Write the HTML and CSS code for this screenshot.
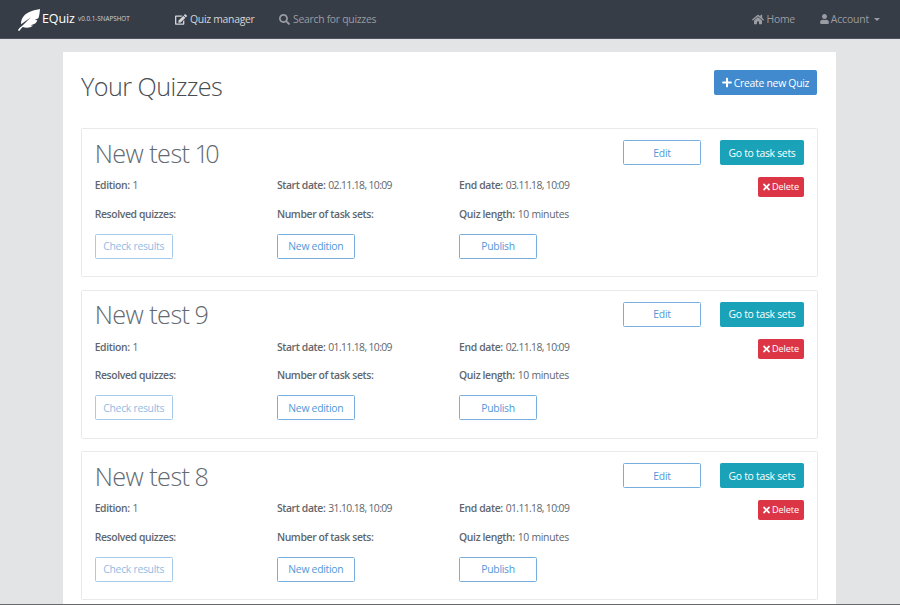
FILE: index.html
```html
<!DOCTYPE html>
<html lang="en">
<head>
<meta charset="utf-8">
<title>EQuiz</title>
<link rel="stylesheet" href="styles.css">
</head>
<body>
<svg class="sprite" aria-hidden="true">
  <symbol id="i-feather" viewBox="0 0 512 512"><path d="M512 0C460 22 350 20 240 82C130 144 66 235 72 352L300 190L118 372C72 410 30 445 4 480C-6 500 14 520 34 506C60 480 80 440 112 420C190 448 290 440 350 392L290 382L400 340C425 315 440 290 452 262L388 258L474 216C500 150 506 70 512 0z"/></symbol>
  <symbol id="i-edit" viewBox="0 0 576 512"><path d="M402.600 83.200l90.200 90.200c3.800 3.800 3.800 10 0 13.800L274.400 405.600l-92.800 10.300c-12.400 1.400-22.900-9.100-21.500-21.500l10.300-92.800L388.800 83.200c3.800-3.800 10-3.800 13.800 0zm162-22.900l-48.800-48.800c-15.200-15.200-39.900-15.200-55.200 0l-35.400 35.400c-3.800 3.800-3.800 10 0 13.800l90.200 90.200c3.800 3.800 10 3.800 13.800 0l35.400-35.400c15.200-15.300 15.200-40 0-55.200zM384 346.200V448H64V128h229.800c3.200 0 6.200-1.300 8.500-3.500l40-40c7.600-7.600 2.200-20.500-8.500-20.500H48C21.500 64 0 85.500 0 112v352c0 26.500 21.500 48 48 48h352c26.500 0 48-21.500 48-48V306.200c0-10.700-12.900-16-20.500-8.500l-40 40c-2.200 2.300-3.500 5.300-3.500 8.500z"/></symbol>
  <symbol id="i-search" viewBox="0 0 512 512"><path d="M505 442.700L405.300 343c-4.500-4.500-10.600-7-17-7H372c27.600-35.300 44-79.700 44-128C416 93.100 322.900 0 208 0S0 93.100 0 208s93.100 208 208 208c48.300 0 92.700-16.400 128-44v16.300c0 6.400 2.500 12.500 7 17l99.700 99.700c9.400 9.400 24.600 9.400 33.900 0l28.300-28.300c9.400-9.400 9.400-24.600.1-34zM208 336c-70.700 0-128-57.200-128-128 0-70.700 57.200-128 128-128 70.700 0 128 57.200 128 128 0 70.700-57.200 128-128 128z"/></symbol>
  <symbol id="i-home" viewBox="0 0 576 512"><path d="M280.370 148.260L96 300.110V464a16 16 0 0 0 16 16l112-.3a16 16 0 0 0 16-16V368a16 16 0 0 1 16-16h64a16 16 0 0 1 16 16v95.600a16 16 0 0 0 16 16.100L464 480a16 16 0 0 0 16-16V300L295.670 148.260a12.200 12.200 0 0 0-15.300 0zM571.600 251.470L488 182.560V44a12 12 0 0 0-12-12h-56a12 12 0 0 0-12 12v72.600L318.470 43a48 48 0 0 0-61 0L4.340 251.470a12 12 0 0 0-1.600 16.900l25.500 31a12 12 0 0 0 16.900 1.600L280.370 107.200a12.200 12.200 0 0 1 15.300 0L530.900 301a12 12 0 0 0 16.900-1.600l25.500-31a12 12 0 0 0-1.700-16.930z"/></symbol>
  <symbol id="i-user" viewBox="0 0 448 512"><path d="M224 256c70.700 0 128-57.300 128-128S294.700 0 224 0 96 57.300 96 128s57.300 128 128 128zm89.600 32h-16.700c-22.200 10.200-46.900 16-72.900 16s-50.600-5.800-72.900-16h-16.700C60.200 288 0 348.200 0 422.400V464c0 26.500 21.500 48 48 48h352c26.500 0 48-21.500 48-48v-41.600c0-74.200-60.200-134.400-134.400-134.400z"/></symbol>
  <symbol id="i-plus" viewBox="0 0 448 512"><path d="M416 208H272V64c0-17.670-14.330-32-32-32h-32c-17.670 0-32 14.330-32 32v144H32c-17.670 0-32 14.330-32 32v32c0 17.670 14.330 32 32 32h144v144c0 17.670 14.330 32 32 32h32c17.670 0 32-14.330 32-32V304h144c17.670 0 32-14.330 32-32v-32c0-17.670-14.330-32-32-32z"/></symbol>
  <symbol id="i-times" viewBox="0 0 352 512"><path d="M242.720 256l100.070-100.070c12.280-12.280 12.280-32.190 0-44.480l-22.240-22.240c-12.280-12.280-32.190-12.280-44.480 0L176 189.280 75.930 89.210c-12.280-12.280-32.190-12.280-44.480 0L9.210 111.450c-12.280 12.280-12.280 32.190 0 44.480L109.280 256 9.210 356.070c-12.280 12.280-12.280 32.190 0 44.480l22.240 22.240c12.280 12.280 32.200 12.280 44.480 0L176 322.720l100.070 100.070c12.280 12.280 32.200 12.280 44.480 0l22.240-22.240c12.280-12.280 12.280-32.190 0-44.480L242.720 256z"/></symbol>
</svg>

<nav class="navbar">
  <a class="brand"><svg class="logo"><use href="#i-feather"/></svg><span class="name">EQuiz</span><span class="version">v0.0.1-SNAPSHOT</span></a>
  <a class="link manager active"><svg class="ic-edit"><use href="#i-edit"/></svg><span>Quiz manager</span></a>
  <a class="link search"><svg class="ic-search"><use href="#i-search"/></svg><span>Search for quizzes</span></a>
  <div class="right">
    <a class="link"><svg class="ic-home"><use href="#i-home"/></svg><span>Home</span></a>
    <a class="link account"><svg class="ic-user"><use href="#i-user"/></svg><span>Account</span><i class="caret"></i></a>
  </div>
</nav>

<main class="panel">
  <header class="head">
    <h1>Your Quizzes</h1>
    <button class="btn primary"><svg class="ic-plus"><use href="#i-plus"/></svg><span>Create new Quiz</span></button>
  </header>

  <section class="card">
    <div class="top"><h2>New test <span class="num">10</span></h2><button class="btn outline">Edit</button><button class="btn info">Go to task sets</button></div>
    <div class="grid">
      <p><b>Edition:</b> 1</p><p><b>Start date:</b> <span class="date">02.11.18, 10:09</span></p><p><b>End date:</b> <span class="date">03.11.18, 10:09</span></p>
      <button class="btn danger"><svg class="ic-times"><use href="#i-times"/></svg><span>Delete</span></button>
      <p><b>Resolved quizzes:</b></p><p><b>Number of task sets:</b></p><p><b>Quiz length:</b> 10 minutes</p>
    </div>
    <div class="actions"><button class="btn outline" disabled>Check results</button><button class="btn outline">New edition</button><button class="btn outline">Publish</button></div>
  </section>

  <section class="card">
    <div class="top"><h2>New test <span class="num">9</span></h2><button class="btn outline">Edit</button><button class="btn info">Go to task sets</button></div>
    <div class="grid">
      <p><b>Edition:</b> 1</p><p><b>Start date:</b> <span class="date">01.11.18, 10:09</span></p><p><b>End date:</b> <span class="date">02.11.18, 10:09</span></p>
      <button class="btn danger"><svg class="ic-times"><use href="#i-times"/></svg><span>Delete</span></button>
      <p><b>Resolved quizzes:</b></p><p><b>Number of task sets:</b></p><p><b>Quiz length:</b> 10 minutes</p>
    </div>
    <div class="actions"><button class="btn outline" disabled>Check results</button><button class="btn outline">New edition</button><button class="btn outline">Publish</button></div>
  </section>

  <section class="card">
    <div class="top"><h2>New test <span class="num">8</span></h2><button class="btn outline">Edit</button><button class="btn info">Go to task sets</button></div>
    <div class="grid">
      <p><b>Edition:</b> 1</p><p><b>Start date:</b> <span class="date">31.10.18, 10:09</span></p><p><b>End date:</b> <span class="date">01.11.18, 10:09</span></p>
      <button class="btn danger"><svg class="ic-times"><use href="#i-times"/></svg><span>Delete</span></button>
      <p><b>Resolved quizzes:</b></p><p><b>Number of task sets:</b></p><p><b>Quiz length:</b> 10 minutes</p>
    </div>
    <div class="actions"><button class="btn outline" disabled>Check results</button><button class="btn outline">New edition</button><button class="btn outline">Publish</button></div>
  </section>
</main>
</body>
</html>
```
FILE: styles.css
```css
* { box-sizing: border-box; }
html, body { margin: 0; }
body {
  height: 605px;
  overflow: hidden;
  display: flex;
  flex-direction: column;
  background: #e2e4e6;
  border-bottom: 1px solid #66686b;
  font-family: "Open Sans", "Noto Sans", sans-serif;
  font-size: 10.4px;
  letter-spacing: -0.28px;
  color: #5f666d;
}
svg { fill: currentColor; flex: none; }
.sprite { display: none; }

.navbar {
  flex: none;
  height: 39px;
  padding: 0 20px 0 18px;
  display: flex;
  align-items: center;
  background: #373d47;
  border-bottom: 1px solid #50535f;
  color: #999ca2;
}
.brand { display: flex; align-items: center; width: 157px; color: #fff; padding-top: 2px; }
.logo { width: 22px; height: 22px; }
.name { margin: -3px 0 0 2px; width: 34px; font-size: 12.5px; letter-spacing: -0.1px; }
.version { margin: -3px 0 0 2px; font-size: 6.3px; letter-spacing: 0; white-space: nowrap; color: #d0d3d7; }
.link { display: flex; align-items: center; white-space: nowrap; }
.link svg { margin-right: 3px; }
.active { color: #d3d5d8; }
.manager { width: 104px; }
.ic-edit { width: 12px; height: 11px; }
.ic-search { width: 11px; height: 11px; }
.ic-home { width: 12px; height: 11px; }
.right .ic-user { width: 9px; height: 10px; margin-right: 2px; }
.right { margin-left: auto; display: flex; gap: 25px; }
.account { letter-spacing: -0.15px; }
.caret { margin-left: 5px; border: 3px solid transparent; border-top-color: currentColor; border-bottom: 0; }

.panel {
  flex: 1;
  min-height: 0;
  overflow: hidden;
  width: 773px;
  margin: 13px 0 0 63px;
  padding: 18px 18.5px 0 18px;
  background: #fff;
}
.head { display: flex; justify-content: space-between; align-items: flex-start; height: 58px; }
h1, h2 { margin: 0; font-weight: 300; font-size: 25.2px; line-height: 34px; white-space: nowrap; letter-spacing: -0.55px; }
h1 { color: #484d52; margin-top: -0.7px; }
h2 { flex: 1; color: #626970; margin-top: -4.3px; }
.num { margin-left: -1px; letter-spacing: -3.6px; }

.btn {
  display: inline-flex;
  align-items: center;
  justify-content: center;
  height: 25px;
  padding: 0;
  border: 1px solid;
  border-radius: 1.5px;
  font: inherit;
  letter-spacing: inherit;
  line-height: 14px;
  white-space: nowrap;
}
.primary { width: 103px; margin-right: 0.5px; background: #408acd; border-color: #408acd; color: #fff; }
.primary svg { width: 10px; height: 11px; margin-right: 2px; }
.outline { width: 78px; background: #fff; border-color: #78aede; color: #5199d7; }
.outline:disabled { opacity: 0.65; }
.info { width: 84px; margin-left: 19px; background: #19a2b8; border-color: #19a2b8; color: #fff; }
.danger { grid-column: 4; grid-row: 1; justify-self: end; width: 46px; height: 20px; background: #dc3545; border-color: #dc3545; color: #fff; font-size: 9.2px; letter-spacing: -0.1px; }
.danger svg { width: 7px; height: 10px; margin-right: 2px; }

.card {
  height: 149px;
  margin-bottom: 12.5px;
  padding: 11px 12.5px 0 12.7px;
  border: 1px solid #e7e9ea;
  border-radius: 1.5px;
}
.top { display: flex; height: 37.4px; align-items: flex-start; }
.grid { display: grid; grid-template-columns: repeat(3, 182.2px) 1fr; grid-template-rows: 28.5px 28px; }
.grid p { margin: 0; padding-top: 0.8px; line-height: 15px; white-space: nowrap; }
.grid b { font-weight: 600; letter-spacing: -0.37px; margin-right: 0.5px; }
.date { letter-spacing: -0.63px; }
.actions { display: grid; grid-template-columns: repeat(3, 182.2px); }
```
